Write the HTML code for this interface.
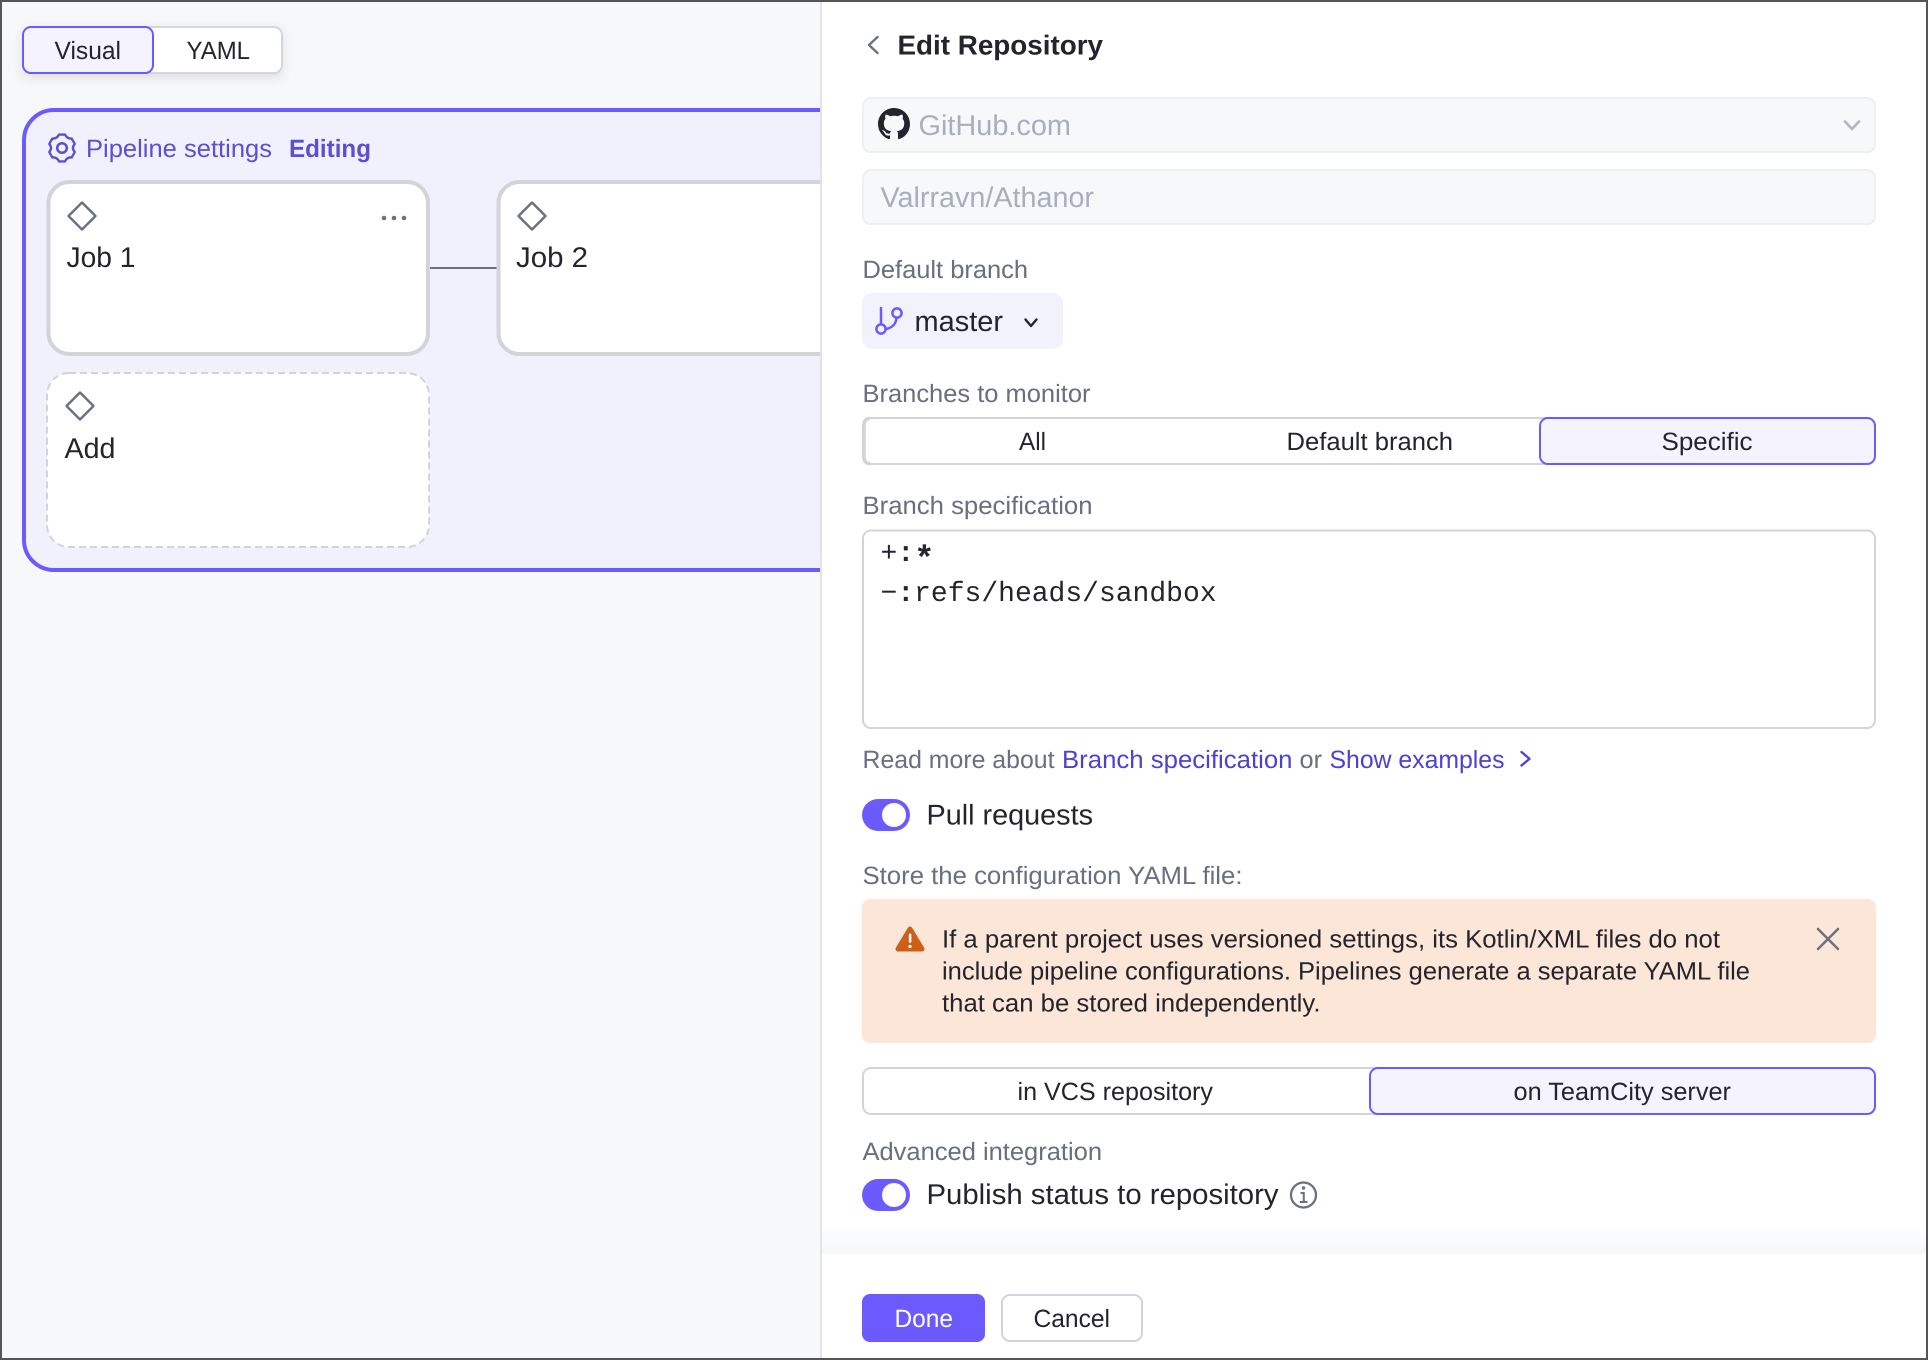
<!DOCTYPE html>
<html lang="en">
<head>
<meta charset="utf-8">
<title>Edit Repository</title>
<style>
html,body{margin:0;padding:0;width:1928px;height:1360px;overflow:hidden;background:#fff}
svg{display:block}
text{font-family:"Liberation Sans",sans-serif;text-rendering:geometricPrecision;fill:#23242e;font-size:25px}
.big{font-size:28.5px}
.lab{fill:#6a6e80}
.link{fill:#4f41cf}
.dim{fill:#a8aec0;font-size:28.5px}
.b{font-weight:700}
.mono{font-family:"Liberation Mono",monospace;font-size:28px}
.ic{fill:none;stroke:#6c7080;stroke-width:2.4;stroke-linecap:round;stroke-linejoin:round}
</style>
</head>
<body>
<svg width="1928" height="1360" viewBox="0 0 1928 1360" xmlns="http://www.w3.org/2000/svg">
<defs>
<filter id="sh" x="-10%" y="-30%" width="120%" height="170%"><feDropShadow dx="0" dy="4" stdDeviation="5" flood-color="#3a4660" flood-opacity=".14"/></filter>
<linearGradient id="fade" x1="0" y1="0" x2="0" y2="1"><stop offset="0" stop-color="#fff"/><stop offset="1" stop-color="#f6f7f9"/></linearGradient>
</defs>

<rect width="1928" height="1360" fill="#f7f8fa"/>

<!-- Visual / YAML -->
<rect x="23" y="27" width="259" height="46" rx="8" fill="#fff" stroke="#d5d6dc" stroke-width="2" filter="url(#sh)"/>
<rect x="23" y="27" width="130" height="46" rx="8" fill="#f5f4fe" stroke="#6b5bff" stroke-width="2"/>
<text x="54.500" y="59" textLength="66.500" lengthAdjust="spacingAndGlyphs">Visual</text>
<text x="186.500" y="59" textLength="63.500" lengthAdjust="spacingAndGlyphs">YAML</text>

<!-- Pipeline panel -->
<rect x="24" y="110" width="900" height="460" rx="30" fill="#f1f1fe" stroke="#6b5bff" stroke-width="4"/>
<g transform="translate(62 148)" fill="none" stroke="#5b4fd0" stroke-width="2.5" stroke-linejoin="round">
<path transform="scale(.92 .95)" d="M3.26,-14.13 L-3.26,-14.13 Q-5.5,-9.53 -10.6,-9.89 L-13.87,-4.24 Q-10,0 -13.87,4.24 L-10.6,9.89 Q-5.5,9.53 -3.26,14.13 L3.26,14.13 Q5.5,9.53 10.6,9.89 L13.87,4.24 Q10,0 13.87,-4.24 L10.6,-9.89 Q5.5,-9.53 3.26,-14.13Z"/>
<circle r="4.800"/>
</g>
<text x="86" y="157" textLength="186" lengthAdjust="spacingAndGlyphs" style="fill:#5b4fd0">Pipeline settings</text>
<text x="289" y="157" textLength="82" lengthAdjust="spacingAndGlyphs" class="b" style="fill:#5b4fd0">Editing</text>

<!-- connector -->
<rect x="430" y="267" width="68" height="2" fill="#6c7080"/>

<!-- Job 1 -->
<rect x="48.500" y="182" width="379.500" height="172" rx="21" fill="#fff" stroke="#d3d4da" stroke-width="4"/>
<path class="ic" d="M82 202.500L95.500 216L82 229.500L68.500 216Z"/>
<circle cx="384" cy="218" r="2.300" fill="#6c7080"/><circle cx="394" cy="218" r="2.300" fill="#6c7080"/><circle cx="404" cy="218" r="2.300" fill="#6c7080"/>
<text class="big" x="66.500" y="267" textLength="69" lengthAdjust="spacingAndGlyphs">Job 1</text>

<!-- Job 2 -->
<rect x="498.500" y="182" width="500" height="172" rx="21" fill="#fff" stroke="#d3d4da" stroke-width="4"/>
<path class="ic" d="M532 202.500L545.500 216L532 229.500L518.500 216Z"/>
<text class="big" x="516" y="267" textLength="72" lengthAdjust="spacingAndGlyphs">Job 2</text>

<!-- Add -->
<rect x="47" y="373" width="382" height="174" rx="22" fill="#fff" stroke="#d3d4da" stroke-width="2" stroke-dasharray="7 4"/>
<path class="ic" d="M80 392.500L93.500 406L80 419.500L66.500 406Z"/>
<text class="big" x="64.500" y="458" textLength="51" lengthAdjust="spacingAndGlyphs">Add</text>

<!-- Right panel -->
<rect x="820" y="0" width="1108" height="1360" fill="#fff"/>
<rect x="820" y="0" width="2" height="1360" fill="#e2e2e8"/>

<path class="ic" d="M877.500 37L869 45L877.500 53" stroke-width="2.600"/>
<text x="897.500" y="54.500" textLength="205.500" lengthAdjust="spacingAndGlyphs" class="b" style="font-size:27.500px">Edit Repository</text>

<!-- Repository select -->
<rect x="863" y="98" width="1012" height="54" rx="8" fill="#f7f8fa" stroke="#eeeff3" stroke-width="2"/>
<path transform="translate(878 108) scale(2)" fill="#23242e" d="M8 0C3.580 0 0 3.580 0 8c0 3.540 2.290 6.530 5.470 7.590.4.070.55-.17.55-.38 0-.19-.01-.82-.01-1.490-2.010.37-2.530-.49-2.690-.94-.09-.23-.48-.94-.82-1.130-.28-.15-.68-.52-.01-.53.63-.01 1.080.58 1.230.82.720 1.210 1.870.87 2.330.66.070-.52.280-.87.510-1.070-1.780-.2-3.640-.89-3.640-3.950 0-.87.310-1.590.820-2.150-.080-.2-.360-1.020.080-2.120 0 0 .670-.21 2.200.820.640-.18 1.320-.27 2-.27s1.360.09 2 .27c1.530-1.040 2.200-.82 2.200-.82.440 1.100.160 1.920.080 2.120.510.560.820 1.270.820 2.150 0 3.070-1.870 3.750-3.650 3.950.290.250.540.730.540 1.480 0 1.070-.010 1.930-.010 2.200 0 .21.150.46.550.38A8.010 8.010 0 0 0 16 8c0-4.420-3.580-8-8-8z"/>
<text class="dim" x="918.500" y="135" textLength="152.500" lengthAdjust="spacingAndGlyphs">GitHub.com</text>
<path d="M1845 121.500L1852 129L1859 121.500" fill="none" stroke="#b2b6c4" stroke-width="2.600" stroke-linecap="round" stroke-linejoin="round"/>

<!-- Repository input -->
<rect x="863" y="170" width="1012" height="54" rx="8" fill="#f7f8fa" stroke="#eeeff3" stroke-width="2"/>
<text class="dim" x="880.500" y="207" textLength="213.500" lengthAdjust="spacingAndGlyphs">Valrravn/Athanor</text>

<!-- Default branch -->
<text class="lab" x="862.500" y="278" textLength="165.500" lengthAdjust="spacingAndGlyphs">Default branch</text>
<rect x="862" y="293" width="201" height="56" rx="10" fill="#f2f2fd"/>
<g fill="none" stroke="#6b5bff" stroke-width="2.500" stroke-linecap="round">
<path d="M881 308V324"/><circle cx="881" cy="329" r="4.600"/><circle cx="897" cy="313" r="4.600"/>
<path d="M896.500 318C896 324 892 328 885.800 329"/>
</g>
<text class="big" x="914.500" y="331" textLength="88.500" lengthAdjust="spacingAndGlyphs">master</text>
<path d="M1025.500 319.500L1031 326L1036.500 319.500" fill="none" stroke="#23242e" stroke-width="2.400" stroke-linecap="round" stroke-linejoin="round"/>

<!-- Branches to monitor -->
<text class="lab" x="862.500" y="402" textLength="228" lengthAdjust="spacingAndGlyphs">Branches to monitor</text>
<rect x="863" y="418" width="1012" height="46" rx="8" fill="#fff" stroke="#d3d4da" stroke-width="2"/>
<path d="M870 418.500Q864 418.500 864 425V457Q864 463.500 870 463.500" fill="none" stroke="#d3d4da" stroke-width="3.500"/>
<rect x="1540" y="418" width="335" height="46" rx="8" fill="#f5f4fe" stroke="#6b5bff" stroke-width="2"/>
<text x="1019" y="450" textLength="27" lengthAdjust="spacingAndGlyphs">All</text>
<text x="1286.500" y="450" textLength="166.500" lengthAdjust="spacingAndGlyphs">Default branch</text>
<text x="1661.500" y="450" textLength="91" lengthAdjust="spacingAndGlyphs">Specific</text>

<!-- Branch specification -->
<text class="lab" x="862.500" y="514" textLength="230" lengthAdjust="spacingAndGlyphs">Branch specification</text>
<rect x="863" y="530.500" width="1012" height="197.500" rx="8" fill="#fff" stroke="#d3d4da" stroke-width="2"/>
<text class="mono" x="880.500" y="561">+<tspan font-weight="700">:</tspan><tspan font-size="34" font-weight="700" dy="8">*</tspan></text>
<text class="mono" x="880.500" y="601">−<tspan font-weight="700">:</tspan>refs/heads/sandbox</text>

<!-- Read more -->
<text class="lab" x="862.500" y="768" textLength="192" lengthAdjust="spacingAndGlyphs">Read more about</text>
<text class="link" x="1062" y="768" textLength="230.500" lengthAdjust="spacingAndGlyphs">Branch specification</text>
<text class="lab" x="1299.500" y="768" textLength="22.500" lengthAdjust="spacingAndGlyphs">or</text>
<text class="link" x="1329.500" y="768" textLength="175" lengthAdjust="spacingAndGlyphs">Show examples</text>
<path d="M1521.500 752L1529.500 758.800L1521.500 765.500" fill="none" stroke="#4f41cf" stroke-width="2.300" stroke-linecap="round" stroke-linejoin="round"/>

<!-- Pull requests -->
<rect x="862" y="799" width="48" height="32" rx="16" fill="#6b5bff"/>
<circle cx="894" cy="815" r="12" fill="#fff"/>
<text class="big" x="926.500" y="824.500" textLength="166.500" lengthAdjust="spacingAndGlyphs">Pull requests</text>

<!-- Store -->
<text class="lab" x="862.500" y="884" textLength="380" lengthAdjust="spacingAndGlyphs">Store the configuration YAML file:</text>

<!-- Alert -->
<rect x="862" y="899" width="1014" height="144" rx="8" fill="#fce6d8"/>
<path d="M910 929L898 949H922Z" fill="#cf5f17" stroke="#cf5f17" stroke-width="5" stroke-linejoin="round"/>
<rect x="908.800" y="933.500" width="2.600" height="9.500" rx="1.200" fill="#fff"/>
<circle cx="910" cy="946.500" r="1.600" fill="#fff"/>
<text x="942" y="947.500" textLength="778" lengthAdjust="spacingAndGlyphs">If a parent project uses versioned settings, its Kotlin/XML files do not</text>
<text x="942" y="979.500" textLength="808" lengthAdjust="spacingAndGlyphs">include pipeline configurations. Pipelines generate a separate YAML file</text>
<text x="942" y="1011.500" textLength="378.500" lengthAdjust="spacingAndGlyphs">that can be stored independently.</text>
<path d="M1818 929L1838 949M1838 929L1818 949" fill="none" stroke="#6c7080" stroke-width="2.500" stroke-linecap="round"/>

<!-- Store segment -->
<rect x="863" y="1068" width="1012" height="46" rx="8" fill="#fff" stroke="#d3d4da" stroke-width="2"/>
<rect x="1370" y="1068" width="505" height="46" rx="8" fill="#f5f4fe" stroke="#6b5bff" stroke-width="2"/>
<text x="1017.500" y="1100" textLength="195.500" lengthAdjust="spacingAndGlyphs">in VCS repository</text>
<text x="1513.500" y="1100" textLength="217.500" lengthAdjust="spacingAndGlyphs">on TeamCity server</text>

<!-- Advanced -->
<text class="lab" x="862.500" y="1160" textLength="239.500" lengthAdjust="spacingAndGlyphs">Advanced integration</text>
<rect x="862" y="1179" width="48" height="32" rx="16" fill="#6b5bff"/>
<circle cx="894" cy="1195" r="12" fill="#fff"/>
<text class="big" x="926.500" y="1204" textLength="352" lengthAdjust="spacingAndGlyphs">Publish status to repository</text>
<circle cx="1303.500" cy="1195" r="12.500" fill="none" stroke="#6c7080" stroke-width="2.300"/>
<circle cx="1303.500" cy="1188" r="1.700" fill="#6c7080"/>
<path d="M1300.500 1193H1303.800V1202M1299.800 1202H1307.500" fill="none" stroke="#6c7080" stroke-width="2"/>

<!-- Footer -->
<rect x="822" y="1224" width="1104" height="30" fill="url(#fade)"/>
<rect x="862" y="1294" width="123" height="48" rx="8" fill="#6b5bff"/>
<text x="894.500" y="1327" textLength="58.500" lengthAdjust="spacingAndGlyphs" style="fill:#fff">Done</text>
<rect x="1002" y="1295" width="140" height="46" rx="8" fill="#fff" stroke="#d3d4da" stroke-width="2"/>
<text x="1033.500" y="1327" textLength="76.500" lengthAdjust="spacingAndGlyphs">Cancel</text>

<!-- Window frame -->
<rect x="1" y="1" width="1926" height="1358" fill="none" stroke="#555558" stroke-width="2"/>
</svg>
</body>
</html>
